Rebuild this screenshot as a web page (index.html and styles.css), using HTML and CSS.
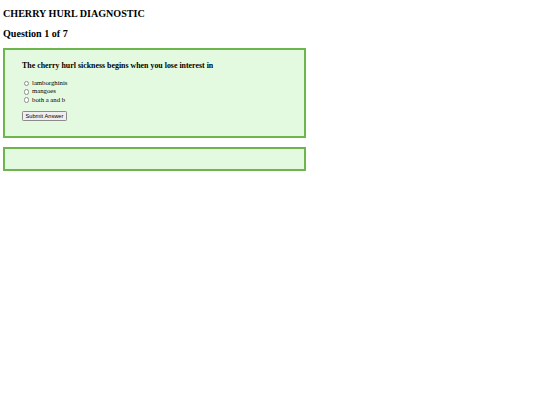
FILE: index.html
```html
<!DOCTYPE html>
<html>
<head>
<meta charset="utf-8">
<title>Cherry Hurl Diagnostic</title>
<link rel="stylesheet" href="styles.css">
</head>
<body>
<div class="page">
  <h1 class="title">CHERRY HURL DIAGNOSTIC</h1>
  <h2 class="progress">Question 1 of 7</h2>
  <form class="card quiz">
    <h3 class="question">The cherry hurl sickness begins when you lose interest in</h3>
    <label class="option"><input type="radio" name="a" class="radio"><span>lamborghinis</span></label>
    <label class="option"><input type="radio" name="a" class="radio"><span>mangoes</span></label>
    <label class="option"><input type="radio" name="a" class="radio"><span>both a and b</span></label>
    <button type="button" class="submit">Submit Answer</button>
  </form>
  <div class="card result"></div>
</div>
</body>
</html>
```
FILE: styles.css
```css
html, body {
  margin: 0;
  padding: 0;
  background: #ffffff;
}
body {
  font-family: "Liberation Serif", "Times New Roman", serif;
  color: #000;
}
.page {
  padding: 8px 0 0 3px;
  width: 303px;
}
.title {
  font-size: 10.1px;
  line-height: 12px;
  font-weight: bold;
  margin: 0;
}
.progress {
  font-size: 10.1px;
  line-height: 12px;
  font-weight: bold;
  margin: 7.6px 0 0 0;
}
.card {
  background: #e3fae0;
  border: 2px solid #6db54d;
  box-sizing: border-box;
  width: 303px;
}
.quiz {
  margin-top: 8.4px;
  padding: 11px 17px 0 17px;
  height: 90px;
  display: flex;
  flex-direction: column;
  align-items: flex-start;
}
.question {
  font-size: 7.9px;
  line-height: 9.1px;
  font-weight: bold;
  margin: 0 0 9px 0;
}
.option {
  display: flex;
  align-items: center;
  font-size: 6.75px;
  line-height: 8.3px;
  height: 8.3px;
}
.radio {
  appearance: none;
  -webkit-appearance: none;
  width: 5.5px;
  height: 5.5px;
  margin: 0.5px 3px 0 1.5px;
  border: 0.6px solid #8f8f8f;
  border-radius: 50%;
  background: #fff;
  box-sizing: border-box;
}
.submit {
  margin-top: 7.3px;
  height: 9.6px;
  box-sizing: border-box;
  font-family: "Liberation Sans", Arial, sans-serif;
  font-size: 5.7px;
  line-height: 6px;
  padding: 0 2.5px;
  border: 0.8px solid #8a8a8a;
  border-radius: 1.3px;
  background: #efefef;
  color: #000;
}
.result {
  margin-top: 9.5px;
  height: 24px;
}
```
